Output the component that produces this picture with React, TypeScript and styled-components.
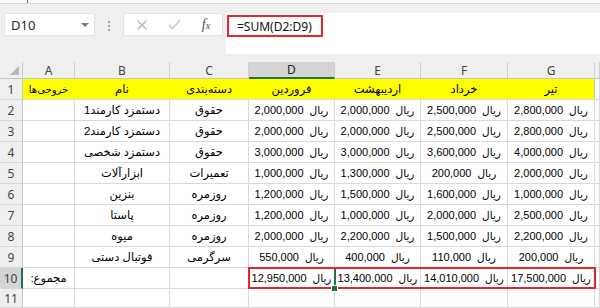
import React from "react";
import { createGlobalStyle, styled } from "styled-components";

const GlobalStyle = createGlobalStyle`
  html, body {
    margin: 0;
    padding: 0;
    background: #ffffff;
  }
  body {
    overflow: hidden;
  }
`;

const COLUMNS = ["A", "B", "C", "D", "E", "F", "G"];
const ACTIVE_COL = "D";
const ACTIVE_ROW = 10;

type CellValue = string | number;

const HEADINGS: CellValue[] = ["خروجی‌ها", "نام", "دسته‌بندی", "فروردین", "اردیبهشت", "خرداد", "تیر"];

const ROWS: CellValue[][] = [
  ["", "دستمزد کارمند1", "حقوق", 2000000, 2000000, 2500000, 2800000],
  ["", "دستمزد کارمند2", "حقوق", 2000000, 2000000, 2500000, 2800000],
  ["", "دستمزد شخصی", "حقوق", 3000000, 3000000, 3600000, 4000000],
  ["", "ابزارآلات", "تعمیرات", 1000000, 1300000, 200000, 2000000],
  ["", "بنزین", "روزمره", 1200000, 1500000, 1600000, 1000000],
  ["", "پاستا", "روزمره", 1200000, 1000000, 2000000, 2500000],
  ["", "میوه", "روزمره", 2000000, 2200000, 1500000, 2200000],
  ["", "فوتبال دستی", "سرگرمی", 550000, 400000, 110000, 200000],
];

const sumColumn = (index: number) =>
  ROWS.reduce((total, row) => total + (row[index] as number), 0);

const TOTALS: CellValue[] = ["مجموع:", "", "", sumColumn(3), sumColumn(4), sumColumn(5), sumColumn(6)];

const formatNumber = (value: number) => value.toLocaleString("en-US");

const CrossIcon = () => (
  <svg width="12" height="12" viewBox="0 0 12 12">
    <path d="M1.5 1.5 L10.5 10.5 M10.5 1.5 L1.5 10.5" stroke="#b3b3b3" strokeWidth="1.3" fill="none" />
  </svg>
);

const CheckIcon = () => (
  <svg width="13" height="11" viewBox="0 0 13 11">
    <path d="M1 6 L4.6 9.5 L12 1.2" stroke="#c2c2c2" strokeWidth="1.4" fill="none" />
  </svg>
);

const Cell = ({ value, rowIndex, colIndex }: { value: CellValue; rowIndex: number; colIndex: number }) => {
  const gridRow = rowIndex + 1;
  const gridCol = colIndex + 2;
  if (typeof value === "number") {
    return (
      <DataCell $r={gridRow} $c={gridCol}>
        <Money>
          <span>{formatNumber(value)}</span>
          <Rial dir="rtl">ریال</Rial>
        </Money>
      </DataCell>
    );
  }
  return (
    <DataCell $r={gridRow} $c={gridCol} dir="rtl">
      {value}
    </DataCell>
  );
};

const App = () => {
  const bodyRows = [...ROWS, TOTALS];

  return (
    <Page>
      <GlobalStyle />
      <RibbonEdge>
        <RibbonTick />
      </RibbonEdge>
      <FormulaBar>
        <NameBox>
          <span>D10</span>
          <DropArrow />
        </NameBox>
        <Grip>
          <GripDot />
          <GripDot />
          <GripDot />
        </Grip>
        <FxBox>
          <FxSlot>
            <CrossIcon />
          </FxSlot>
          <FxSlot>
            <CheckIcon />
          </FxSlot>
          <FxSlot>
            <FxLabel>
              f<small>x</small>
            </FxLabel>
          </FxSlot>
        </FxBox>
        <FormulaInput>
          <FormulaText>=SUM(D2:D9)</FormulaText>
        </FormulaInput>
      </FormulaBar>

      <Sheet>
        <Corner $r={1} $c={1}>
          <CornerMark />
        </Corner>
        {COLUMNS.map((col, i) => (
          <ColHeader key={col} $r={1} $c={i + 2} $active={col === ACTIVE_COL}>
            {col}
          </ColHeader>
        ))}
        <ColHeader $r={1} $c={9} $active={false} />

        {Array.from({ length: 11 }, (_, i) => (
          <RowHeader key={i} $r={i + 2} $c={1} $active={i + 1 === ACTIVE_ROW}>
            {i + 1}
          </RowHeader>
        ))}

        {HEADINGS.map((heading, i) => (
          <HeadingCell
            key={i}
            $r={2}
            $c={i + 2}
            $last={i === HEADINGS.length - 1}
            $narrow={i === 0}
            dir="rtl"
          >
            {heading}
          </HeadingCell>
        ))}
        <DataCell $r={2} $c={9} />

        {bodyRows.map((row, r) => (
          <React.Fragment key={r}>
            {row.map((value, c) => (
              <Cell key={c} value={value} rowIndex={r + 2} colIndex={c} />
            ))}
            <DataCell $r={r + 3} $c={9} />
          </React.Fragment>
        ))}

        {Array.from({ length: 8 }, (_, c) => (
          <DataCell key={c} $r={12} $c={c + 2} />
        ))}

        <ActiveCell />
        <TotalsFrame />
        <FillHandle />
      </Sheet>
    </Page>
  );
};

const Page = styled.div`
  width: 600px;
  height: 308px;
  overflow: hidden;
  display: flex;
  flex-direction: column;
  background: #ffffff;
  font-family: "Noto Sans", "DejaVu Sans", sans-serif;
`;
const RibbonEdge = styled.div`
  height: 3px;
  padding-left: 27px;
  background: #f7f7f7;
  border-bottom: 1px solid #d8d8d8;
`;
const RibbonTick = styled.div`
  width: 1px;
  height: 3px;
  background: #6b6b6b;
`;
const FormulaBar = styled.div`
  box-sizing: border-box;
  height: 58px;
  display: flex;
  align-items: flex-start;
  padding: 9px 0 0 4px;
  background: #efefef;
`;
const NameBox = styled.div`
  box-sizing: border-box;
  width: 91px;
  height: 23px;
  display: flex;
  align-items: center;
  justify-content: space-between;
  padding: 0 5px 0 6px;
  background: #ffffff;
  border: 1px solid #e2e2e2;
  font-size: 13px;
  color: #1f1f1f;
`;
const DropArrow = styled.span`
  width: 0;
  height: 0;
  border-left: 4px solid transparent;
  border-right: 4px solid transparent;
  border-top: 4px solid #7a7a7a;
`;
const Grip = styled.div`
  width: 28px;
  height: 23px;
  display: flex;
  flex-direction: column;
  align-items: center;
  justify-content: center;
  gap: 2px;
  padding-top: 3px;
  box-sizing: border-box;
`;
const GripDot = styled.span`
  width: 2px;
  height: 2px;
  background: #a3a3a3;
`;
const FxBox = styled.div`
  box-sizing: border-box;
  width: 100px;
  height: 23px;
  display: flex;
  align-items: center;
  padding-left: 2px;
  background: #ffffff;
  border: 1px solid #e2e2e2;
`;
const FxSlot = styled.div`
  width: 32px;
  display: flex;
  align-items: center;
  justify-content: center;
`;
const FxLabel = styled.span`
  font-family: "Liberation Serif", "DejaVu Serif", serif;
  font-style: italic;
  font-size: 14px;
  color: #4d4d4d;

  small {
    font-size: 10px;
  }
`;
const FormulaInput = styled.div`
  box-sizing: border-box;
  flex: 1;
  height: 41px;
  margin-left: 3px;
  padding: 2px 0 0 1px;
  background: #ffffff;
`;
const FormulaText = styled.div`
  box-sizing: border-box;
  width: 96px;
  height: 22px;
  display: flex;
  align-items: center;
  padding-left: 8px;
  border: 2px solid #e3262b;
  font-size: 12px;
  color: #111111;
`;
const Sheet = styled.div`
  display: grid;
  grid-template-columns: 23px 52px 95px 79px 86px 86px 87px 87px 5px;
  grid-template-rows: 17px repeat(10, 21px) 19px;
`;
const GridItem = styled.div<{ $r: number; $c: number }>`
  grid-row: ${({ $r }) => $r};
  grid-column: ${({ $c }) => $c};
  box-sizing: border-box;
  display: flex;
  align-items: center;
  justify-content: center;
  min-width: 0;
  overflow: hidden;
  white-space: nowrap;
`;
const Corner = styled(GridItem)`
  align-items: flex-end;
  justify-content: flex-end;
  padding: 0 3px 3px 0;
  background: #efefef;
  border-right: 1px solid #c9c9c9;
  border-bottom: 1px solid #c6c6c6;
`;
const CornerMark = styled.span`
  width: 0;
  height: 0;
  border-left: 9px solid transparent;
  border-bottom: 9px solid #b8b8b8;
`;
const ColHeader = styled(GridItem)<{ $active: boolean }>`
  background: ${({ $active }) => ($active ? "#d4d4d4" : "#efefef")};
  border-right: 1px solid #d0d0d0;
  border-bottom: ${({ $active }) => ($active ? "2px solid #217346" : "1px solid #c6c6c6")};
  font-size: 12px;
  color: ${({ $active }) => ($active ? "#1d1d1d" : "#444444")};
`;
const RowHeader = styled(GridItem)<{ $active: boolean }>`
  background: ${({ $active }) => ($active ? "#d4d4d4" : "#efefef")};
  border-right: ${({ $active }) => ($active ? "2px solid #217346" : "1px solid #c6c6c6")};
  border-bottom: 1px solid #d6d6d6;
  font-size: 12px;
  color: #444444;
`;
const DataCell = styled(GridItem)`
  background: #ffffff;
  border-right: 1px solid #d9d9d9;
  border-bottom: 1px solid #d9d9d9;
  font-family: "Liberation Sans", "DejaVu Sans", sans-serif;
  font-size: 11.5px;
  color: #000000;
`;
const HeadingCell = styled(DataCell)<{ $last: boolean; $narrow: boolean }>`
  background: #ffff00;
  border-right-color: ${({ $last }) => ($last ? "#c8c8c8" : "#ffff00")};
  font-size: ${({ $narrow }) => ($narrow ? "10px" : "11.5px")};
`;
const Money = styled.div`
  display: flex;
  align-items: center;
  gap: 6px;
  direction: ltr;
  font-size: 11px;
`;
const Rial = styled.span`
  font-size: 10.5px;
`;
const ActiveCell = styled.div`
  grid-row: 11;
  grid-column: 5;
  z-index: 1;
  margin: -1px -1px 0 -1px;
  border: 2px solid #217346;
  pointer-events: none;
`;
const TotalsFrame = styled.div`
  grid-row: 11;
  grid-column: 5 / 9;
  z-index: 2;
  margin: -1px -1px 0 -1px;
  border: 2px solid #e3262b;
  pointer-events: none;
`;
const FillHandle = styled.div`
  grid-row: 11;
  grid-column: 5;
  align-self: end;
  justify-self: end;
  z-index: 3;
  width: 5px;
  height: 5px;
  margin: 0 -3px -3px 0;
  background: #217346;
  border: 1px solid #ffffff;
`;

export default App;
